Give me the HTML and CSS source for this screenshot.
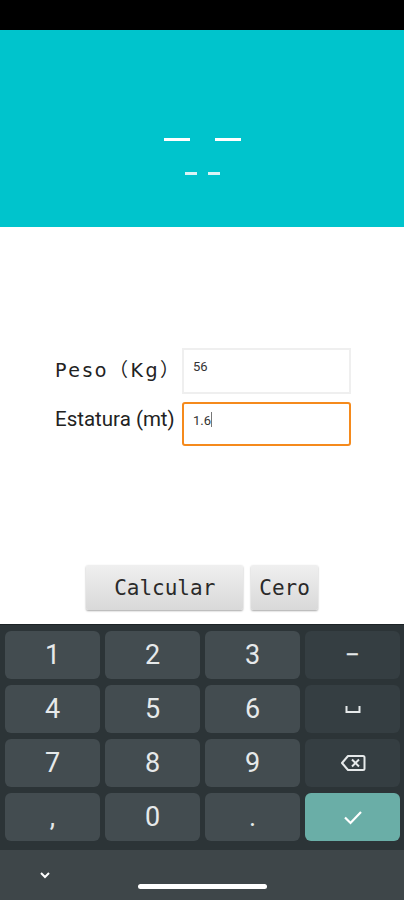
FILE: index.html
```html
<!DOCTYPE html>
<html lang="es">
<head>
<meta charset="UTF-8" />
<meta name="viewport" content="width=device-width, initial-scale=1.0" />
<title>Calculadora IMC</title>
<link rel="stylesheet" href="styles.css">
</head>
<body>
  <div class="phone">
    <div class="status-bar"></div>

    <header class="banner">
      <div class="dash-row big">
        <span class="dash"></span>
        <span class="dash"></span>
      </div>
      <div class="dash-row small">
        <span class="dash"></span>
        <span class="dash"></span>
      </div>
    </header>

    <main class="content">
      <div class="form">
        <label class="label label-peso" for="peso">Peso（Kg）</label>
        <div class="field"><span class="value">56</span></div>

        <label class="label label-estatura" for="estatura">Estatura (mt)</label>
        <div class="field active"><span class="value">1.6</span><span class="caret"></span></div>
      </div>

      <div class="actions">
        <button class="btn wide">Calcular</button>
        <button class="btn">Cero</button>
      </div>
    </main>

    <section class="keyboard">
      <div class="key">1</div>
      <div class="key">2</div>
      <div class="key">3</div>
      <div class="key fn">&minus;</div>

      <div class="key">4</div>
      <div class="key">5</div>
      <div class="key">6</div>
      <div class="key fn">
        <svg width="16" height="9" viewBox="0 0 16 9"><path d="M1.5 1v6h13V1" fill="none" stroke="#e6e9ea" stroke-width="2"/></svg>
      </div>

      <div class="key">7</div>
      <div class="key">8</div>
      <div class="key">9</div>
      <div class="key fn">
        <svg width="26" height="18" viewBox="0 0 26 18"><path d="M8 2h15a1.5 1.5 0 0 1 1.5 1.5v11A1.5 1.5 0 0 1 23 16H8L2 9z" fill="none" stroke="#e6e9ea" stroke-width="2" stroke-linejoin="round"/><path d="M12 5.5l7 7M19 5.5l-7 7" stroke="#e6e9ea" stroke-width="2"/></svg>
      </div>

      <div class="key low">,</div>
      <div class="key">0</div>
      <div class="key low">.</div>
      <div class="key done">
        <svg width="20" height="16" viewBox="0 0 20 16"><path d="M2 8.5l5.5 5.5L18 3" fill="none" stroke="#fff" stroke-width="2.2"/></svg>
      </div>
    </section>

    <nav class="nav-bar">
      <svg class="chevron" width="12" height="8" viewBox="0 0 12 8"><path d="M2 2l4 4 4-4" fill="none" stroke="#fff" stroke-width="2"/></svg>
      <div class="pill"></div>
    </nav>
  </div>
</body>
</html>
```

FILE: styles.css
```css
* { box-sizing: border-box; }
body {
  margin: 0;
  background: #fff;
  font-family: Roboto, "Noto Sans", sans-serif;
}
.phone {
  width: 404px;
  height: 900px;
  display: flex;
  flex-direction: column;
  overflow: hidden;
}
.status-bar {
  height: 30px;
  background: #000;
}

/* Teal banner */
.banner {
  height: 197px;
  background: #00c4cc;
  display: flex;
  flex-direction: column;
  align-items: center;
  padding-top: 108px;
}
.dash-row { display: flex; }
.dash-row.big { gap: 25px; }
.dash-row.big .dash {
  width: 26px;
  height: 3px;
  background: #fff;
}
.dash-row.small {
  gap: 11px;
  margin-top: 31px;
}
.dash-row.small .dash {
  width: 12px;
  height: 3px;
  background: #d9f3f5;
}

/* Form area */
.content {
  flex: 1;
  display: flex;
  flex-direction: column;
  padding: 121px 0 14px;
}
.form {
  display: grid;
  grid-template-columns: 127px 169px;
  row-gap: 8px;
  margin-left: 55px;
  align-items: start;
}
.label {
  color: #222;
  white-space: nowrap;
}
.label-peso {
  font-family: "DejaVu Sans", "Noto Sans CJK SC", sans-serif;
  font-size: 19px;
  letter-spacing: 2.5px;
  padding-top: 7px;
}
.label-estatura {
  font-size: 20.5px;
  padding-top: 5px;
}
.field {
  height: 46px;
  border: 2px solid #efefef;
  display: flex;
  align-items: flex-start;
  padding: 9px 9px 0;
  font-size: 13px;
  color: #333;
}
.field.active {
  height: 44px;
  border-color: #f58a1c;
  border-radius: 3px;
}
.caret {
  width: 1px;
  height: 15px;
  background: #777;
  margin-top: -1px;
}

.actions {
  margin-top: auto;
  display: flex;
  justify-content: center;
  gap: 8px;
}
.btn {
  height: 45px;
  padding: 0 8px;
  border: none;
  border-radius: 2px;
  background: linear-gradient(#efefef, #d9d9d9);
  box-shadow: 0 1px 2px rgba(0, 0, 0, 0.35);
  font-family: "DejaVu Sans Mono", monospace;
  font-size: 21px;
  color: #2a2a2a;
}
.btn.wide { padding: 0 28px; }

/* Keyboard */
.keyboard {
  height: 226px;
  background: #2c3437;
  display: grid;
  grid-template-columns: repeat(4, 95px);
  grid-auto-rows: 48px;
  gap: 6px 5px;
  padding: 6px 4px 0 5px;
  border-top: 1px solid #1c2326;
}
.key {
  background: #434c50;
  border-radius: 6px;
  display: flex;
  align-items: center;
  justify-content: center;
  color: #e6e9ea;
  font-size: 27px;
}
.key.fn { background: #353e42; }
.key.low {
  align-items: flex-end;
  padding-bottom: 8px;
}
.key.done { background: #6aaea7; }

.nav-bar {
  height: 50px;
  background: #3e4649;
  display: flex;
  align-items: flex-start;
  padding-left: 39px;
}
.chevron { margin-top: 21px; }
.pill {
  width: 129px;
  height: 5px;
  border-radius: 3px;
  background: #fff;
  margin: 34px 0 0 87px;
}
```
